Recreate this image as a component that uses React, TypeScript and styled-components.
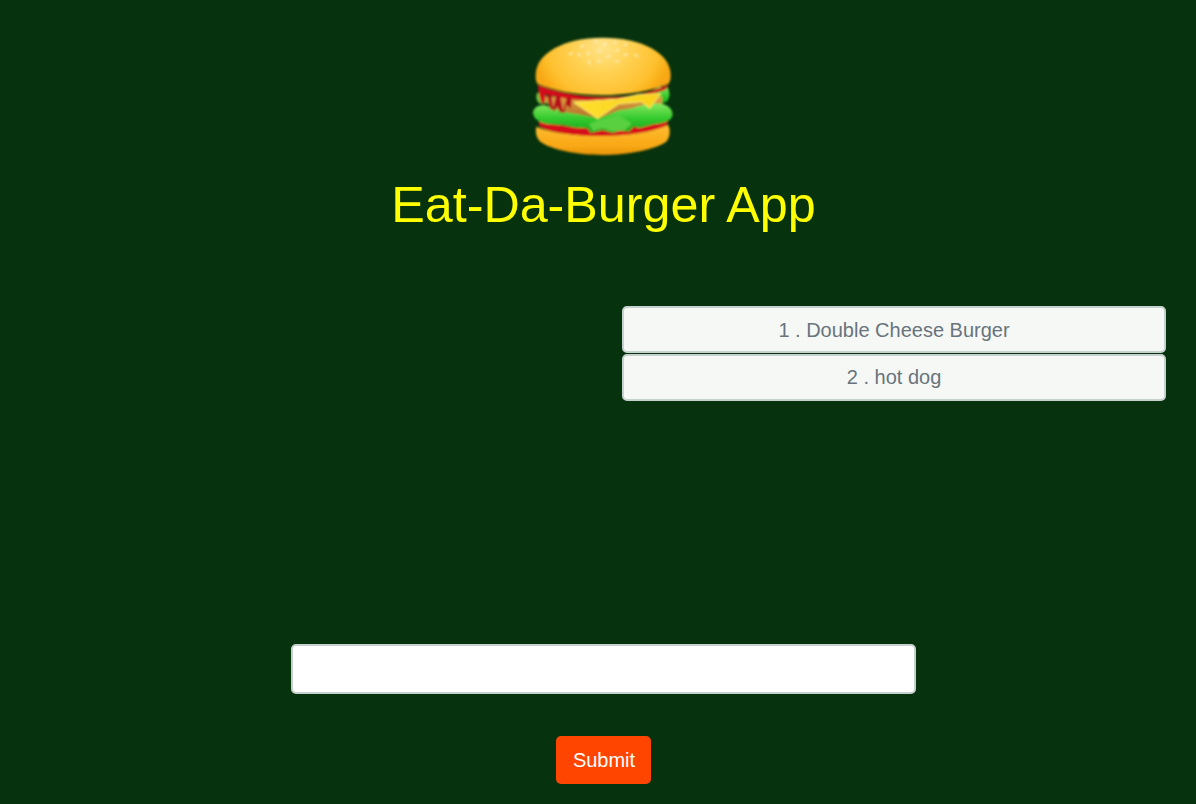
import React from "react";
import styled, { createGlobalStyle } from "styled-components";

const Global = createGlobalStyle`
  html, body { margin: 0; padding: 0; background: #06320e; }
  body { font-family: "Liberation Sans", Arial, sans-serif; overflow: hidden; }
  * { box-sizing: border-box; }
`;

const Page = styled.main`
  width: 1196px;
  height: 804px;
  background: #06320e;
  display: flex;
  flex-direction: column;
`;

const Header = styled.header`
  display: flex;
  flex-direction: column;
  align-items: center;
  padding: 25px 0 0 11px;
`;

const Logo = styled.svg`
  display: block;
  width: 170px;
  height: 140px;
`;

const Title = styled.h1`
  margin: 11px 0 0;
  font-size: 50.25px;
  line-height: 58px;
  font-weight: 400;
  color: #ffff00;
`;

const ListRow = styled.section`
  display: flex;
  justify-content: flex-end;
  padding: 72px 30px 0 0;
`;

const List = styled.ul`
  list-style: none;
  margin: 0;
  padding: 0;
  width: 544px;
  display: flex;
  flex-direction: column;
  gap: 1px;
`;

const Item = styled.li`
  height: 47px;
  display: flex;
  align-items: center;
  justify-content: center;
  font-size: 20px;
  color: #68747c;
  background: #f6f8f6;
  border: 2px solid #c5d1cc;
  border-radius: 5px;

  &:first-child {
    padding-top: 2px;
  }
`;

const Form = styled.form`
  display: flex;
  flex-direction: column;
  align-items: center;
  padding: 243px 0 0 11px;
  gap: 42px;
`;

const Input = styled.input`
  width: 625px;
  height: 50px;
  padding: 6px 12px;
  font-size: 20px;
  font-family: inherit;
  background: #fff;
  border: 2px solid #c5d1cc;
  border-radius: 5px;
  outline: none;
`;

const Submit = styled.button`
  width: 95px;
  height: 48px;
  font-size: 20px;
  font-family: inherit;
  color: #fff;
  background: #ff4500;
  border: none;
  border-radius: 5px;
  padding: 0 0 0 1px;
`;

const seeds = [
  [190,64,-30],[230,49,20],[258,57,-25],[288,52,15],[320,59,-25],[240,79,10],[295,76,-15],
  [155,86,-10],[180,89,30],[208,86,-20],[268,94,-30],[320,89,-20],[352,92,20],
  [210,112,75],[240,109,-15],[295,109,20],
];

const Burger = () => (
  <Logo viewBox="0 0 510 420" role="img" aria-label="Burger">
    <defs>
      <radialGradient id="bun" gradientUnits="userSpaceOnUse" cx="250" cy="45" r="210" gradientTransform="translate(0 25) scale(1 0.9)">
        <stop offset="0" stopColor="#ffe38a" />
        <stop offset="0.4" stopColor="#ffd254" />
        <stop offset="0.8" stopColor="#fec02e" />
        <stop offset="1" stopColor="#f8a812" />
      </radialGradient>
      <linearGradient id="bottom" x1="0" y1="0" x2="0" y2="1">
        <stop offset="0" stopColor="#fdbc30" />
        <stop offset="0.7" stopColor="#f9a815" />
        <stop offset="1" stopColor="#e89408" />
      </linearGradient>
      <linearGradient id="leaf" x1="0" y1="0" x2="0" y2="1">
        <stop offset="0" stopColor="#86e85e" />
        <stop offset="0.5" stopColor="#35ca2e" />
        <stop offset="1" stopColor="#18a81c" />
      </linearGradient>
      <linearGradient id="patty" x1="0" y1="0" x2="0" y2="1">
        <stop offset="0" stopColor="#e0a040" />
        <stop offset="1" stopColor="#b5702a" />
      </linearGradient>
      <linearGradient id="cheese" x1="0" y1="0" x2="1" y2="0">
        <stop offset="0" stopColor="#ffe030" />
        <stop offset="1" stopColor="#f8d018" />
      </linearGradient>
      <filter id="soft"><feGaussianBlur stdDeviation="2.4" /></filter>
    </defs>
    <g filter="url(#soft)">
      <path d="M54 205C70 200 85 212 95 235L62 236C52 228 50 215 54 205Z" fill="#74c93e" />
      <path d="M385 205L420 186L448 190L452 210L446 228L420 240L392 235Z" fill="url(#leaf)" />
      <path d="M70 215L430 215L428 250C400 268 330 276 240 278C170 278 110 262 90 240Z" fill="url(#patty)" />
      <path d="M60 288C120 304 200 312 250 312C330 312 410 300 448 284L445 300C420 318 330 334 240 334C160 334 80 320 60 302Z" fill="#d8101c" />
      <path d="M42 262C46 244 62 238 84 242C104 250 130 262 180 268L240 280L300 256L340 250C360 240 400 234 430 236C452 242 464 258 460 274C454 290 430 296 405 298L360 310L345 304L330 320L300 316L282 324L250 316L215 324L205 310L170 308L130 300L90 298C62 294 42 282 42 262Z" fill="url(#leaf)" />
      <path d="M210 296L250 282L300 270L338 296L318 316L282 320L250 310L222 318Z" fill="#58d040" />
      <path d="M56 180C120 204 190 216 255 217C320 217 380 210 450 178L440 194C380 216 310 228 250 228C190 228 130 222 80 208L76 240L66 232L60 208Z" fill="#d4101c" />
      <path d="M84 205L97 208L102 252L112 210L124 214L132 262L144 216L158 220L156 250L142 240L136 264L122 262L116 244L106 258L92 250Z" fill="#b80f1e" />
      <path d="M165 232L298 222L360 208L425 206L392 250L368 230L300 236L236 281Z" fill="url(#cheese)" stroke="#ffef70" strokeWidth="3" strokeLinejoin="round" />
      <path d="M50 150C50 85 135 38 250 38C370 38 455 85 455 150C455 166 452 172 448 176C400 198 320 210 250 210C170 210 100 196 55 176C52 170 50 165 50 150Z" fill="url(#bun)" />
      <path d="M52 305C90 322 170 333 245 333C320 333 400 322 448 300C456 320 452 338 442 350C410 372 330 390 250 390C170 390 100 374 66 352C52 340 48 322 52 305Z" fill="url(#bottom)" />
    </g>
    <g filter="url(#soft)">
      {seeds.map(([x, y, a], i) => (
        <ellipse key={i} cx={x} cy={y} rx="7" ry="3" fill="#fff0c4" opacity="0.85" transform={`rotate(${a} ${x} ${y})`} />
      ))}
    </g>
  </Logo>
);

export default function App() {
  return (
    <Page>
      <Global />
      <Header>
        <Burger />
        <Title>Eat-Da-Burger App</Title>
      </Header>
      <ListRow>
        <List>
          <Item>1 . Double Cheese Burger</Item>
          <Item>2 . hot dog</Item>
        </List>
      </ListRow>
      <Form onSubmit={(e) => e.preventDefault()}>
        <Input type="text" aria-label="Burger name" />
        <Submit type="submit">Submit</Submit>
      </Form>
    </Page>
  );
}
